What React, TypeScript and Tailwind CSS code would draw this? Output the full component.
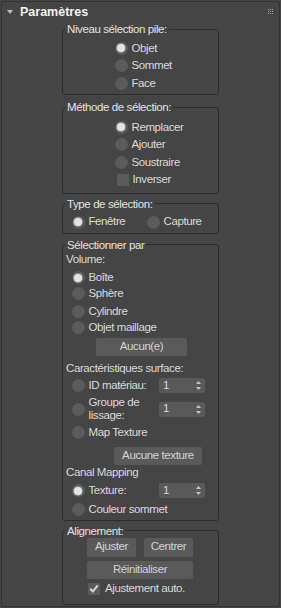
import React from "react";

const font = "font-['Liberation_Sans',Arial,sans-serif]";

function Radio({ checked }: { checked?: boolean }) {
  return (
    <span className="w-[13px] h-[13px] rounded-full bg-[#5b5b5b] flex items-center justify-center shrink-0">
      {checked && (
        <span className="w-[8px] h-[8px] rounded-full bg-[#e4e4e4] shadow-[0_0_0_1px_#8c8c8c]" />
      )}
    </span>
  );
}

function RadioRow({
  label,
  checked,
  className,
}: {
  label: string;
  checked?: boolean;
  className: string;
}) {
  return (
    <div className={`flex items-center ${className}`}>
      <Radio checked={checked} />
      <span className="ml-[4px] whitespace-nowrap">{label}</span>
    </div>
  );
}

function Spinner() {
  return (
    <div className="w-[46px] h-[15px] bg-[#595959] rounded-[2px] flex items-center justify-between pl-[4px] pr-[4px] shrink-0">
      <span className="leading-none">1</span>
      <svg width="5" height="9" viewBox="0 0 5 9">
        <polygon points="2.5,0 5,3 0,3" fill="#c4c4c4" />
        <polygon points="0,6 5,6 2.5,9" fill="#c4c4c4" />
      </svg>
    </div>
  );
}

function Button({ label, className }: { label: string; className: string }) {
  return (
    <div
      className={`bg-[#5a5a5a] rounded-[2px] flex items-center justify-center text-[#d2d2d2] ${className}`}
    >
      {label}
    </div>
  );
}

function Group({
  title,
  className,
  children,
}: {
  title: string;
  className: string;
  children: React.ReactNode;
}) {
  return (
    <fieldset
      className={`ml-[60px] w-[157px] border border-[#2d2d2d] rounded-[3px] px-[2px] ${className}`}
    >
      <legend className="px-[2px] leading-[14px] text-[#e2e2e2]">{title}</legend>
      {children}
    </fieldset>
  );
}

export default function App() {
  return (
    <div
      className={`w-[281px] h-[608px] bg-[#444444] pt-px overflow-hidden ${font} text-[11.5px] tracking-[-0.4px] text-[#dadada]`}
    >
      <div className="ml-[1px] w-[279px] h-[606px] border border-[#333333] rounded-[3px] bg-[#454545]">
        {/* header */}
        <div className="h-[20px] flex items-center relative">
          <svg className="ml-[5px]" width="6" height="4" viewBox="0 0 6 4">
            <polygon points="0,0 6,0 3,4" fill="#bdbdbd" />
          </svg>
          <span className="ml-[7px] text-[12.5px] font-bold tracking-normal text-[#f2f2f2]">
            Paramètres
          </span>
          <div className="ml-auto mr-[6px] grid grid-cols-3 gap-[1px] -mt-[2px]">
            {Array.from({ length: 9 }).map((_, i) => (
              <span key={i} className="w-[1px] h-[1px] bg-[#a0a0a0]" />
            ))}
          </div>
        </div>

        {/* Niveau sélection pile */}
        <Group title="Niveau sélection pile:" className="pb-[2px]">
          <div className="flex flex-col pt-[3.5px] ml-[49.5px]">
            <RadioRow label="Objet" checked className="h-[17.5px]" />
            <RadioRow label="Sommet" className="h-[17.5px]" />
            <RadioRow label="Face" className="h-[17.5px]" />
          </div>
        </Group>

        {/* Méthode de sélection */}
        <Group title="Méthode de sélection:" className="mt-[5px] pb-[3.5px]">
          <div className="flex flex-col pt-[4.5px] ml-[49.5px]">
            <RadioRow label="Remplacer" checked className="h-[17.5px]" />
            <RadioRow label="Ajouter" className="h-[17.5px]" />
            <RadioRow label="Soustraire" className="h-[17.5px]" />
            <div className="flex items-center h-[18px] ml-[2px]">
              <span className="w-[12px] h-[12px] bg-[#5b5b5b] shrink-0" />
              <span className="ml-[4px]">Inverser</span>
            </div>
          </div>
        </Group>

        {/* Type de sélection */}
        <Group title="Type de sélection:" className="mt-[3px] pb-[2px]">
          <div className="flex items-center pt-[3px] h-[20px] ml-[6.5px]">
            <RadioRow label="Fenêtre" checked className="h-[17px] w-[75px]" />
            <RadioRow label="Capture" className="h-[17px]" />
          </div>
        </Group>

        {/* Sélectionner par */}
        <Group title="Sélectionner par" className="mt-[4px] pb-[2px]">
          <div className="flex flex-col">
            <div className="h-[14px] leading-[14px] ml-[1px]">Volume:</div>
            <div className="flex flex-col ml-[6.5px]">
              <RadioRow label="Boîte" checked className="h-[16px] mt-[4px]" />
              <RadioRow label="Sphère" className="h-[16px]" />
              <RadioRow label="Cylindre" className="h-[16px] mt-[2px]" />
              <RadioRow label="Objet maillage" className="h-[16px]" />
            </div>
            <Button label="Aucun(e)" className="ml-[31px] w-[91px] h-[18px] mt-[2px]" />
            <div className="h-[14px] leading-[14px] mt-[5px] ml-[1px]">
              Caractéristiques surface:
            </div>
            <div className="flex items-center h-[16px] mt-[3px] ml-[6.5px]">
              <Radio />
              <span className="ml-[4px] flex-1">ID matériau:</span>
              <div className="mr-[11px]">
                <Spinner />
              </div>
            </div>
            <div className="flex items-center h-[27px] mt-[2px] ml-[6.5px]">
              <Radio />
              <span className="ml-[4px] flex-1 leading-[13px]">
                Groupe de
                <br />
                lissage:
              </span>
              <div className="mr-[11px]">
                <Spinner />
              </div>
            </div>
            <RadioRow label="Map Texture" className="h-[16px] mt-[2px] ml-[6.5px]" />
            <Button
              label="Aucune texture"
              className="ml-[49px] w-[88px] h-[18px] mt-[6px]"
            />
            <div className="h-[14px] leading-[14px] ml-[1px]">Canal Mapping</div>
            <div className="flex items-center h-[16px] mt-[4px] ml-[6.5px]">
              <Radio checked />
              <span className="ml-[4px] flex-1">Texture:</span>
              <div className="mr-[11px]">
                <Spinner />
              </div>
            </div>
            <RadioRow label="Couleur sommet" className="h-[16px] mt-[3px] ml-[6.5px]" />
          </div>
        </Group>

        {/* Alignement */}
        <Group title="Alignement:" className="mt-[3px] pb-[8px]">
          <div className="flex flex-col ml-[22px]">
            <div className="flex gap-[8px]">
              <Button label="Ajuster" className="w-[49px] h-[19px]" />
              <Button label="Centrer" className="w-[49px] h-[19px]" />
            </div>
            <Button label="Réinitialiser" className="w-[106px] h-[18px] mt-[4px]" />
            <div className="flex items-center h-[14px] mt-[3px] ml-[1px]">
              <span className="w-[12px] h-[12px] bg-[#5b5b5b] flex items-center justify-center shrink-0">
                <svg width="10" height="9" viewBox="0 0 10 9">
                  <path
                    d="M1.2 4.8 L3.8 7.4 L8.8 1.4"
                    fill="none"
                    stroke="#d4d4d4"
                    strokeWidth="2"
                  />
                </svg>
              </span>
              <span className="ml-[5px]">Ajustement auto.</span>
            </div>
          </div>
        </Group>
      </div>
    </div>
  );
}
